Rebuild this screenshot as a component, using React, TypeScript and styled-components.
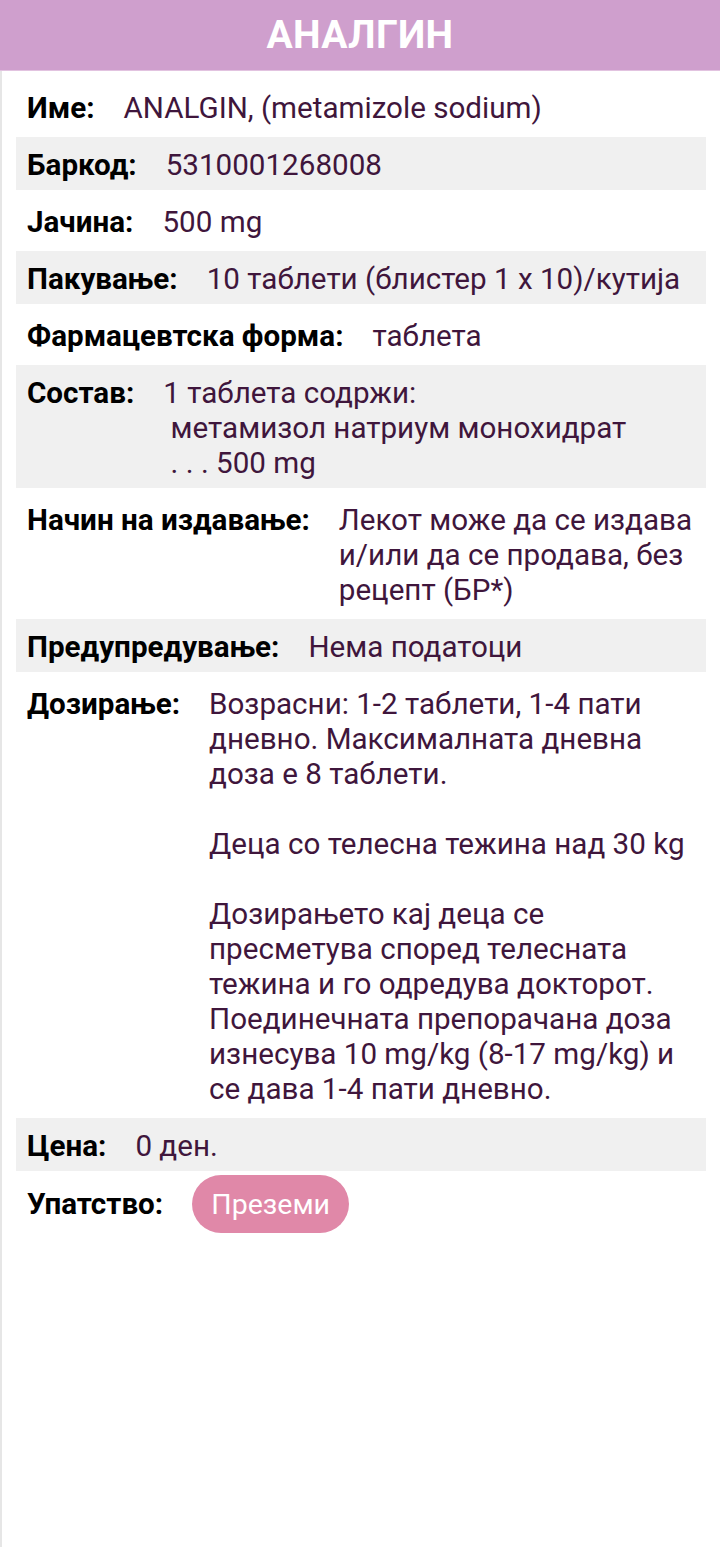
import React from "react";
import styled, { createGlobalStyle } from "styled-components";

const Global = createGlobalStyle`
  html, body { margin: 0; padding: 0; background: #ffffff; }
  body { font-family: Roboto, "Noto Sans", sans-serif; }
  * { box-sizing: border-box; }
`;

const Page = styled.div`
  width: 720px;
  min-height: 1547px;
  background: #ffffff;
  display: flex;
  flex-direction: column;
`;

const Header = styled.header`
  height: 71px;
  background: #cf9fcd;
  border-bottom: 1px solid #e2c3e0;
  display: flex;
  align-items: center;
  justify-content: center;
`;

const Title = styled.h1`
  margin: 0;
  color: #ffffff;
  font-family: Roboto, sans-serif;
  font-weight: 700;
  font-size: 39px;
  letter-spacing: 0.3px;
`;

const Body = styled.main`
  flex: 1;
  border-left: 2px solid #e6e6e6;
  padding: 9px 14px 0 14px;
  display: flex;
  flex-direction: column;
  gap: 4px;
`;

const Row = styled.div<{ $shaded?: boolean; $center?: boolean }>`
  display: flex;
  align-items: ${(p) => (p.$center ? "center" : "flex-start")};
  gap: 29px;
  padding: ${(p) => (p.$center ? "0 10px 0 11px" : "11px 10px 7px 11px")};
  background: ${(p) => (p.$shaded ? "#f0f0f0" : "transparent")};
  font-size: 29.6px;
  line-height: 35px;
`;

const Label = styled.span`
  font-weight: 700;
  color: #000000;
  white-space: nowrap;
`;

const Value = styled.span`
  flex: 1;
  color: #3f163c;
  white-space: pre-wrap;
  font-weight: 400;
`;

const Button = styled.button`
  height: 58px;
  width: 157px;
  border: none;
  border-radius: 29px;
  background: #e088a8;
  color: #ffffff;
  font-family: Roboto, sans-serif;
  font-size: 28.5px;
  font-weight: 400;
  padding: 0;
`;

const rows: { label: string; value: string }[] = [
  { label: "Име:", value: "ANALGIN, (metamizole sodium)" },
  { label: "Баркод:", value: "5310001268008" },
  { label: "Јачина:", value: "500 mg" },
  { label: "Пакување:", value: "10 таблети (блистер 1 x 10)/кутија" },
  { label: "Фармацевтска форма:", value: "таблета" },
  {
    label: "Состав:",
    value: "1 таблета содржи:\n метамизол натриум монохидрат\n . . . 500 mg",
  },
  {
    label: "Начин на издавање:",
    value: "Лекот може да се издава и/или да се продава, без рецепт (БР*)",
  },
  { label: "Предупредување:", value: "Нема податоци" },
  {
    label: "Дозирање:",
    value:
      "Возрасни: 1-2 таблети, 1-4 пати дневно. Максималната дневна доза е 8 таблети.\n\nДеца со телесна тежина над 30 kg\n\nДозирањето кај деца се пресметува според телесната тежина и го одредува докторот. Поединечната препорачана доза изнесува 10 mg/kg (8-17 mg/kg) и се дава 1-4 пати дневно.",
  },
  { label: "Цена:", value: "0 ден." },
];

export default function App() {
  return (
    <Page>
      <Global />
      <Header>
        <Title>АНАЛГИН</Title>
      </Header>
      <Body>
        {rows.map((r, i) => (
          <Row key={r.label} $shaded={i % 2 === 1}>
            <Label>{r.label}</Label>
            <Value>{r.value}</Value>
          </Row>
        ))}
        <Row $center>
          <Label>Упатство:</Label>
          <Button>Преземи</Button>
        </Row>
      </Body>
    </Page>
  );
}
